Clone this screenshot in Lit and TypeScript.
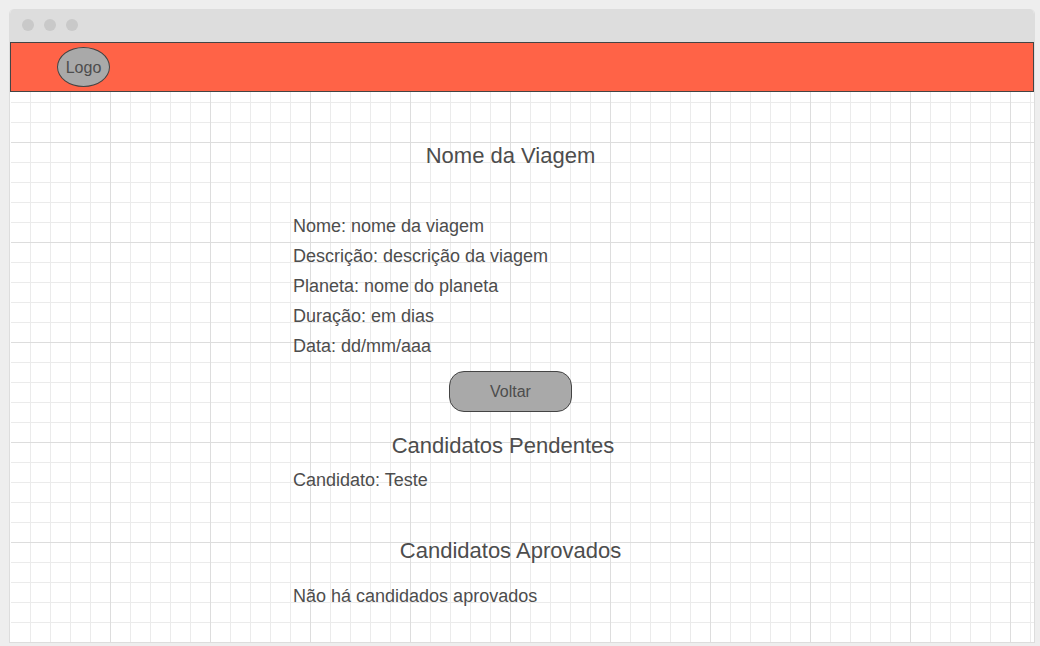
import { LitElement, html, css } from "lit";
import { customElement } from "lit/decorators.js";

@customElement("app-root")
export class AppRoot extends LitElement {
  static styles = css`
    :host {
      display: flex;
      box-sizing: border-box;
      min-height: 100vh;
      padding: 9px 5px 3px 9px;
      background: #eeeeee;
      color: #4d4d4d;
      font-family: "Liberation Sans", Arial, sans-serif;
    }
    .window {
      flex: 1;
      display: flex;
      flex-direction: column;
      box-sizing: border-box;
      border: 1px solid #dddddd;
      border-top: 0;
      border-radius: 5px 5px 0 0;
      overflow: hidden;
      background: #ffffff;
    }
    .titlebar {
      display: flex;
      align-items: center;
      gap: 10px;
      height: 33px;
      padding: 0 12px 1px;
      box-sizing: border-box;
      background: #dddddd;
    }
    .dot {
      width: 12px;
      height: 12px;
      border-radius: 50%;
      background: #c9c9c9;
    }
    .header {
      display: flex;
      align-items: center;
      height: 50px;
      box-sizing: border-box;
      padding: 0 46px;
      background: #ff6347;
      border: 1px solid #444444;
    }
    .logo {
      display: flex;
      align-items: center;
      justify-content: center;
      box-sizing: border-box;
      width: 53px;
      height: 40px;
      padding-top: 2px;
      border: 1px solid #444444;
      border-radius: 50%;
      background: #a9a9a9;
      color: inherit;
      font-size: 16px;
      text-decoration: none;
    }
    .content {
      flex: 1;
      display: flex;
      justify-content: center;
      padding: 50px 24px 32px 0;
      border-left: 1px solid #ffffff;
      background-color: #ffffff;
      background-clip: padding-box;
      background-image: linear-gradient(to right, #dddddd 1px, transparent 1px),
        linear-gradient(to bottom, #dddddd 1px, transparent 1px),
        linear-gradient(to right, #ebebeb 1px, transparent 1px),
        linear-gradient(to bottom, #ebebeb 1px, transparent 1px);
      background-size: 100px 100px, 100px 100px, 20px 20px, 20px 20px;
      background-position: -1px 50px, -1px 50px, -1px 10px, -1px 10px;
    }
    .page {
      width: 435px;
      display: flex;
      flex-direction: column;
    }
    h1,
    h2 {
      margin: 0;
      font-size: 22px;
      line-height: 28px;
      font-weight: 400;
      text-align: center;
    }
    p {
      margin: 0;
      font-size: 18px;
      line-height: 20px;
    }
    .details {
      display: flex;
      flex-direction: column;
      gap: 10px;
      margin: 46px 0 15px;
    }
    .group {
      display: flex;
      flex-direction: column;
    }
    .pending {
      width: 420px;
      gap: 10px;
      margin: 20px 0 47px;
    }
    .approved {
      gap: 21px;
    }
    button {
      align-self: center;
      box-sizing: border-box;
      width: 123px;
      height: 41px;
      border: 1px solid #444444;
      border-radius: 15px;
      background: #a9a9a9;
      color: inherit;
      font: inherit;
      font-size: 16px;
    }
  `;

  render() {
    return html`
      <div class="window">
        <div class="titlebar">
          <span class="dot"></span><span class="dot"></span><span class="dot"></span>
        </div>
        <header class="header"><a class="logo" href="#">Logo</a></header>
        <main class="content">
          <div class="page">
            <h1>Nome da Viagem</h1>
            <div class="details">
              <p>Nome: nome da viagem</p>
              <p>Descrição: descrição da viagem</p>
              <p>Planeta: nome do planeta</p>
              <p>Duração: em dias</p>
              <p>Data: dd/mm/aaa</p>
            </div>
            <button type="button">Voltar</button>
            <section class="group pending">
              <h2>Candidatos Pendentes</h2>
              <p>Candidato: Teste</p>
            </section>
            <section class="group approved">
              <h2>Candidatos Aprovados</h2>
              <p>Não há candidados aprovados</p>
            </section>
          </div>
        </main>
      </div>
    `;
  }
}
